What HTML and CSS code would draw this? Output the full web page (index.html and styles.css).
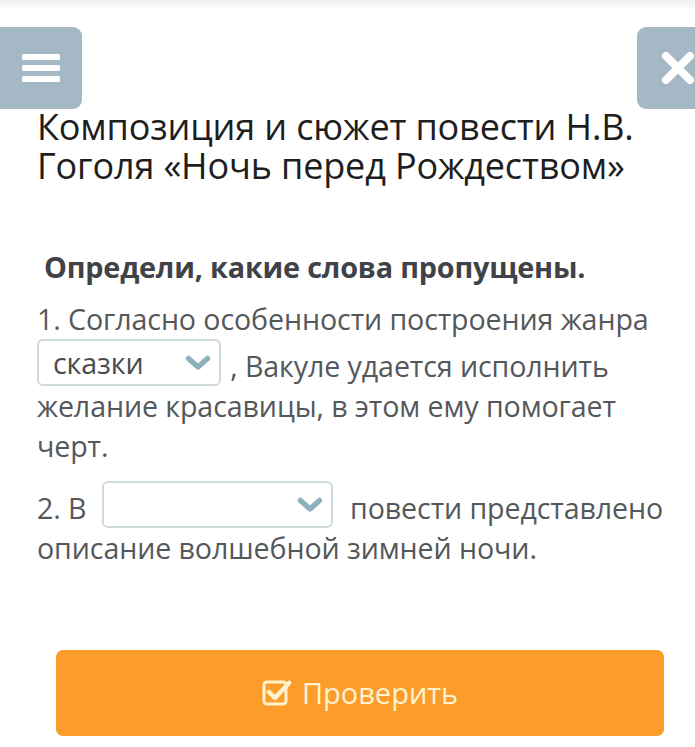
FILE: index.html
```html
<!DOCTYPE html>
<html lang="ru">
<head>
<meta charset="utf-8">
<link rel="stylesheet" href="styles.css">
</head>
<body>
<div class="topbar"></div>
<div class="toolbar">
  <button class="tb-btn menu" aria-label="menu">
    <svg width="38" height="32" viewBox="0 0 38 32"><rect x="0" y="2" width="38" height="6" rx="1.5" fill="#fff"/><rect x="0" y="13" width="38" height="6" rx="1.5" fill="#fff"/><rect x="0" y="24" width="38" height="6" rx="1.5" fill="#fff"/></svg>
  </button>
  <button class="tb-btn close" aria-label="close">
    <svg width="34" height="34" viewBox="0 0 34 34"><path d="M5 5 L29 29 M29 5 L5 29" stroke="#fff" stroke-width="8" stroke-linecap="round"/></svg>
  </button>
</div>
<main class="content">
  <h1 class="title">Композиция и сюжет повести Н.В. Гоголя «Ночь перед Рождеством»</h1>
  <h2 class="task">Определи, какие слова пропущены.</h2>
  <p class="q q1">1. Согласно особенности построения жанра <span class="sel s1"><span class="val">сказки</span><svg class="chev" width="26" height="16" viewBox="0 0 26 16"><path d="M3.5 3.5 L13 12 L22.5 3.5" fill="none" stroke="#8fb0bd" stroke-width="5.5" stroke-linecap="round" stroke-linejoin="round"/></svg></span> , Вакуле удается исполнить желание красавицы, в этом ему помогает черт.</p>
  <p class="q q2">2. В <span class="sel s2"><span class="val"></span><svg class="chev" width="26" height="16" viewBox="0 0 26 16"><path d="M3.5 3.5 L13 12 L22.5 3.5" fill="none" stroke="#8fb0bd" stroke-width="5.5" stroke-linecap="round" stroke-linejoin="round"/></svg></span> повести представлено описание волшебной зимней ночи.</p>
</main>
<div class="footer">
  <button class="check">
    <svg width="30" height="30" viewBox="0 0 30 30"><rect x="2" y="4" width="22" height="22" rx="3" fill="none" stroke="#fff2cf" stroke-width="3"/><path d="M7 14 L13 20 L27 5" fill="none" stroke="#fff2cf" stroke-width="4.5" stroke-linecap="round" stroke-linejoin="round"/></svg>
    <span>Проверить</span>
  </button>
</div>
</body>
</html>
```
FILE: styles.css
```css
* { box-sizing: border-box; }
html, body { margin: 0; padding: 0; }
body {
  width: 695px;
  height: 747px;
  overflow: hidden;
  background: #fff;
  font-family: "Open Sans", "Noto Sans", sans-serif;
}
.topbar {
  height: 8px;
  background: linear-gradient(#f0f0f0, #fafafa);
}
.toolbar {
  display: flex;
  justify-content: space-between;
  margin-top: 19px;
  height: 82px;
}
.tb-btn {
  border: 0;
  background: #a4b8c6;
  width: 82px;
  height: 82px;
  padding: 0;
  display: flex;
  align-items: center;
  justify-content: center;
}
.menu { border-radius: 0 9px 9px 0; }
.close { width: 58px; border-radius: 9px 0 0 9px; justify-content: flex-start; padding-left: 24px; }
.content {
  padding: 0 28px 0 37px;
  margin-top: -2px;
}
.title {
  margin: 0;
  font-weight: 400;
  font-size: 36px;
  line-height: 39px;
  color: #1e1e1e;
  letter-spacing: -0.15px;
}
.task {
  margin: 62px 0 0 7px;
  font-size: 28.8px;
  font-weight: 700;
  line-height: 40px;
  color: #3f4347;
  letter-spacing: -0.2px;
}
.q {
  margin: 0;
  font-size: 28.6px;
  line-height: 40px;
  color: #55585b;
  letter-spacing: -0.1px;
}
.q1 { margin-top: 12px; }
.q2 { margin-top: 15px; }
.sel {
  display: inline-flex;
  align-items: center;
  justify-content: space-between;
  height: 47px;
  border: 2px solid #cfdadd;
  border-radius: 6px;
  vertical-align: bottom;
  padding: 0 8px 0 14px;
  background: #fff;
  margin: 0;
}
.s1 { width: 184px; margin-right: 2px; }
.s2 { width: 231px; margin-left: 8px; margin-right: 10px; }
.val { color: #4a4d50; }
.footer {
  position: absolute;
  left: 56px;
  top: 650px;
  width: 608px;
}
.check {
  width: 608px;
  height: 86px;
  border: 0;
  border-radius: 7px;
  background: #fb9c2b;
  display: flex;
  align-items: center;
  justify-content: center;
  gap: 10px;
  font-family: "Open Sans", "Noto Sans", sans-serif;
  font-size: 29px;
  color: #fff2cf;
  padding: 0;
}
.check span { margin-top: -2px; }
```
